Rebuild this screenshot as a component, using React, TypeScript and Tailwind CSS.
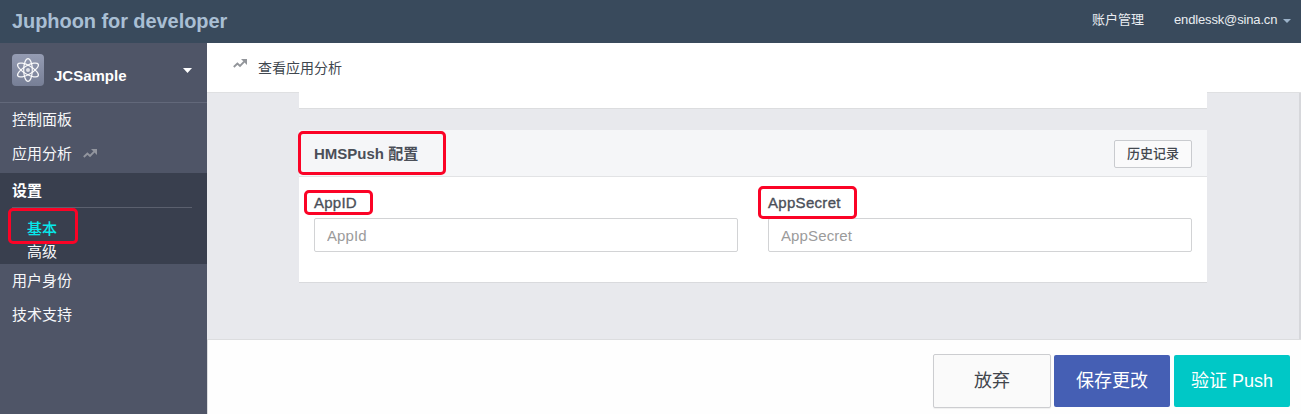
import React from "react";

function TrendIcon({ className }: { className: string }) {
  return (
    <svg viewBox="0 0 14 9" className={className}>
      <path d="M0.8 8 4.4 4.6 7 6.9 11.2 2.6" fill="none" stroke="currentColor" strokeWidth="1.9" />
      <path d="M8 0h6v6z" fill="currentColor" />
    </svg>
  );
}

function AtomIcon() {
  return (
    <svg viewBox="0 0 32 32" className="h-8 w-8" fill="none" stroke="#fff" strokeOpacity="0.92" strokeWidth="1.25">
      <ellipse cx="16" cy="16" rx="4.3" ry="11.4" />
      <ellipse cx="16" cy="16" rx="4.3" ry="11.8" transform="rotate(60 16 16)" />
      <ellipse cx="16" cy="16" rx="4.3" ry="11.8" transform="rotate(120 16 16)" />
      <circle cx="16" cy="16" r="2" fill="#fff" fillOpacity="0.75" stroke="none" />
    </svg>
  );
}

function Caret({ className }: { className: string }) {
  return (
    <svg viewBox="0 0 10 5" preserveAspectRatio="none" className={className} fill="currentColor">
      <path d="M0 0h10L5 5z" />
    </svg>
  );
}

function Highlight({ className }: { className: string }) {
  return <span className={`pointer-events-none absolute z-10 rounded-[5px] border-3 border-[#fb0326] ${className}`} />;
}

function Field({ label, placeholder, mark, labelSpacing }: { label: string; placeholder: string; mark: string; labelSpacing: string }) {
  return (
    <div className="relative flex w-[424px] flex-col">
      <label className={`h-[23px] text-[15px] leading-[15px] text-[#4b4f58] [-webkit-text-stroke:0.35px_#4b4f58] ${labelSpacing}`}>{label}</label>
      <input
        placeholder={placeholder}
        className="h-[34px] w-full rounded-[2px] border border-[#d2d3d5] bg-white px-3 text-[15px] tracking-[0.12px] outline-none placeholder:text-[#9b9b9b]"
      />
      <Highlight className={mark} />
    </div>
  );
}

function Sidebar() {
  return (
    <aside className="flex w-[207px] shrink-0 flex-col bg-[#4f5567] text-[15px] text-[#f6f7f9]">
      <div className="flex h-[60px] shrink-0 items-start border-b border-[#62687a] pl-3">
        <div className="mt-[11px] h-8 w-8 rounded-[4px] bg-linear-to-b from-[#959cb3] to-[#777f96]">
          <AtomIcon />
        </div>
        <span className="mt-[24px] ml-[10px] w-[129px] text-[15px] leading-[18px] font-bold text-white">JCSample</span>
        <Caret className="mt-[25px] h-[5px] w-[9px] text-white" />
      </div>
      <div className="flex h-[34px] items-center pl-3">控制面板</div>
      <div className="flex h-9 items-center pb-0.5 pl-3">
        应用分析
        <TrendIcon className="mb-0.5 ml-[11px] h-[9px] w-[14px] text-[#92959e]" />
      </div>
      <div className="flex h-[91px] shrink-0 flex-col bg-[#393f4e]">
        <div className="mr-[15px] ml-3 flex h-[35px] shrink-0 items-center border-b border-[#5b606e] pt-0.5 font-bold text-white">设置</div>
        <div className="relative flex h-[33px] items-center pt-2.5 pl-[27px] font-medium text-[#07e8ec]">
          基本
          <Highlight className="top-0 left-[8px] h-[36px] w-[70px]" />
        </div>
        <div className="flex h-[21px] items-center pl-[27px] leading-[21px]">高级</div>
      </div>
      <div className="flex h-[34px] items-center pl-3">用户身份</div>
      <div className="flex h-[34px] items-center pl-3">技术支持</div>
    </aside>
  );
}

export default function App() {
  return (
    <div className="flex h-[414px] w-[1301px] flex-col overflow-hidden font-['Liberation_Sans','Noto_Sans_CJK_SC',sans-serif]">
      <header className="flex h-[43px] shrink-0 items-center bg-[#394a5c] pl-3">
        <h1 className="pb-0.5 text-[20px] leading-6 font-bold tracking-[-0.07px] text-[#a9bfd4]">Juphoon for developer</h1>
        <nav className="ml-auto flex items-center pr-[10px] pb-1 text-[13px] leading-5 text-[#e9edf1]">
          <span className="w-[82px]">账户管理</span>
          <span className="w-[109px] tracking-[-0.15px]">endlessk@sina.cn</span>
          <Caret className="mt-[3px] h-1 w-2 text-[#9cb3ca]" />
        </nav>
      </header>
      <div className="flex min-h-0 flex-1">
        <Sidebar />
        <main className="flex min-w-0 flex-1 flex-col bg-[#e8e9ed]">
          <div className="flex h-[50px] shrink-0 items-center border-b border-[#dfe0e2] bg-white pl-[26px] text-[14px] text-[#40474f]">
            <TrendIcon className="mb-[9px] h-[9px] w-[14px] text-[#92959a]" />
            <span className="ml-[11px] pt-px">查看应用分析</span>
          </div>
          <div className="flex min-h-0 flex-1 flex-col border-r-2 border-[#d6d7db] pl-[92px]">
            <section className="-mt-px h-[17px] w-[908px] shrink-0 border-b border-[#dcdddf] bg-white" />
            <section className="mt-[21px] flex h-[153px] w-[908px] shrink-0 flex-col border-b border-[#d9dadd] bg-white">
              <div className="relative flex h-[47px] shrink-0 items-center justify-between border-b border-[#e2e3e5] bg-[#f5f6f8] px-[15px]">
                <h2 className="pt-0.5 text-[15px] font-bold text-[#4b4f58]">HMSPush 配置</h2>
                <button className="mt-0.5 h-7 w-[78px] rounded-[2px] border border-[#c9cbcf] bg-[#fafafb] text-[13px] font-medium text-[#43474f]">历史记录</button>
                <Highlight className="top-px -left-px h-[44px] w-[148px]" />
              </div>
              <div className="flex gap-[30px] px-[15px] pt-[18px]">
                <Field label="AppID" placeholder="AppId" mark="-top-[5px] -left-[10px] h-[25px] w-[69px]" labelSpacing="tracking-[0.25px]" />
                <Field label="AppSecret" placeholder="AppSecret" mark="-top-[9px] -left-[10px] h-[33px] w-[99px]" labelSpacing="tracking-[0.3px]" />
              </div>
            </section>
          </div>
          <footer className="flex h-[75px] shrink-0 items-start justify-end border-t border-l border-[#dcdddf] bg-[#fefefe] pt-[14px] pr-[11px] text-[18px]">
            <button className="h-[54px] w-[118px] rounded-[2px] border border-[#cccdd0] bg-[#fafafa] text-[#42464d] shadow-[0_1px_1px_rgba(0,0,0,0.06)]">放弃</button>
            <button className="mt-px ml-[3px] h-[52px] w-[116px] rounded-[2px] bg-[#455fb4] text-white">保存更改</button>
            <button className="mt-px ml-1 h-[52px] w-[116px] rounded-[2px] bg-[#00c8c6] text-white">验证 Push</button>
          </footer>
        </main>
      </div>
    </div>
  );
}
